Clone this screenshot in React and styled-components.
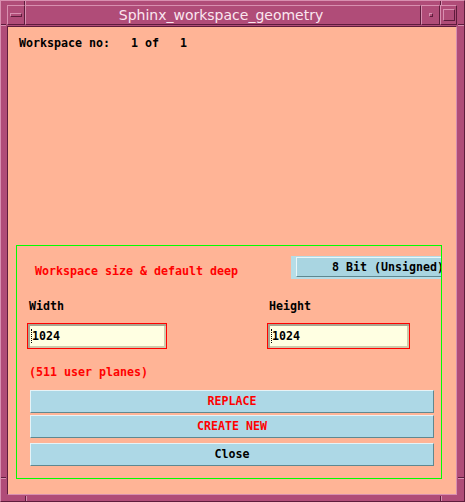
import React from 'react';
import styled, { createGlobalStyle } from 'styled-components';

const FRAME = '#b04c78';
const FRAME_LIGHT = '#d88fb0';
const FRAME_DARK = '#5e1c3c';
const PEACH = '#ffb496';

const Global = createGlobalStyle`
  html, body { margin: 0; padding: 0; background: ${FRAME}; }
  * { box-sizing: border-box; }
`;

const Window = styled.div`
  position: relative;
  width: 465px;
  height: 502px;
  display: flex;
  flex-direction: column;
  background: ${FRAME};
  padding: 4px 7px 6px 6px;
  border-top: 1px solid ${FRAME_LIGHT};
  border-left: 1px solid ${FRAME_LIGHT};
  border-right: 1px solid ${FRAME_DARK};
  border-bottom: 1px solid ${FRAME_DARK};
`;

const Tick = styled.span`
  position: absolute;
  left: ${p => p.$x}px;
  top: ${p => p.$y}px;
  width: ${p => p.$w}px;
  height: ${p => p.$h}px;
  background: ${FRAME_DARK};
  box-shadow: ${p => (p.$w > p.$h ? `0 1px 0 ${FRAME_LIGHT}` : `1px 0 0 ${FRAME_LIGHT}`)};
`;

const TitleBar = styled.div`
  display: flex;
  height: 20px;
  margin-bottom: 1px;
`;

const TitleSeg = styled.div`
  display: flex;
  align-items: center;
  justify-content: center;
  flex: ${p => (p.$w ? `0 0 ${p.$w}px` : '1 1 auto')};
  background: ${FRAME};
  border-top: 1px solid ${FRAME_LIGHT};
  border-left: 1px solid ${FRAME_LIGHT};
  border-right: 1px solid ${FRAME_DARK};
  border-bottom: 1px solid ${FRAME_DARK};
`;

const TitleText = styled.span`
  font-family: "DejaVu Sans", sans-serif;
  font-size: 14px;
  line-height: 18px;
  color: #fbe6ef;
  margin-left: -4px;
`;

const MenuBar = styled.span`
  width: 12px;
  height: 4px;
  border-top: 1px solid ${FRAME_LIGHT};
  border-left: 1px solid ${FRAME_LIGHT};
  border-right: 1px solid ${FRAME_DARK};
  border-bottom: 1px solid ${FRAME_DARK};
`;

const MinBox = styled.span`
  width: 4px;
  height: 4px;
  border-top: 1px solid ${FRAME_LIGHT};
  border-left: 1px solid ${FRAME_LIGHT};
  border-right: 1px solid ${FRAME_DARK};
  border-bottom: 1px solid ${FRAME_DARK};
`;

const MaxBox = styled.span`
  width: 12px;
  height: 12px;
  border-top: 1px solid ${FRAME_LIGHT};
  border-left: 1px solid ${FRAME_LIGHT};
  border-right: 1px solid ${FRAME_DARK};
  border-bottom: 1px solid ${FRAME_DARK};
`;

const Content = styled.div`
  flex: 1 1 auto;
  display: flex;
  flex-direction: column;
  background: ${PEACH};
  border-top: 1px solid ${FRAME_DARK};
  border-left: 1px solid ${FRAME_DARK};
  border-right: 1px solid ${FRAME_LIGHT};
  border-bottom: 1px solid ${FRAME_LIGHT};
  font-family: "DejaVu Sans Mono", "Liberation Mono", monospace;
  font-weight: bold;
  font-size: 11.63px;
  color: #000;
`;

const Header = styled.div`
  margin-top: 9px;
  padding-left: 11px;
  line-height: 14px;
  white-space: pre;
`;

const GreenBox = styled.div`
  margin: auto 0 15px 8px;
  width: 426px;
  height: 234px;
  border: 1px solid #00ff00;
  overflow: hidden;
  display: flex;
  flex-direction: column;
`;

const TopRow = styled.div`
  margin-top: 10px;
  height: 23px;
  display: flex;
  justify-content: space-between;
`;

const RedText = styled.div`
  color: #ff0000;
  line-height: 14px;
  padding-left: ${p => p.$pl}px;
  padding-top: ${p => p.$pt || 0}px;
  margin-top: ${p => p.$mt || 0}px;
`;

const DepthMenu = styled.div`
  width: 150px;
  height: 23px;
  background: #b6dde7;
  padding: 1px 0 2px 5px;
  overflow: hidden;
`;

const DepthButton = styled.div`
  width: 170px;
  height: 100%;
  background: #a9d5e1;
  border-top: 1px solid #eaf6f9;
  border-left: 1px solid #eaf6f9;
  border-bottom: 1px solid #5f8890;
  padding-left: 35px;
  line-height: 18px;
  white-space: pre;
`;

const Fields = styled.div`
  display: grid;
  grid-template-columns: 240px 143px;
  padding-left: 10px;
  margin-top: 20px;
`;

const Field = styled.div`
  display: flex;
  flex-direction: column;
`;

const FieldLabel = styled.div`
  padding-left: 2px;
  line-height: 14px;
`;

const TextBox = styled.div`
  margin-top: 10px;
  width: ${p => p.$w}px;
  height: 26px;
  border: 1px solid #ff0000;
  background: #ffffe2;
  box-shadow: inset 2px 2px 0 #a9a58f, inset -2px -2px 0 #cfc9ac;
  display: flex;
  align-items: center;
  padding-left: 3px;
`;

const Caret = styled.span`
  width: 1px;
  height: 14px;
  border-left: 1px dotted #000;
`;

const Buttons = styled.div`
  display: flex;
  flex-direction: column;
  margin: 11px 7px 0 13px;
`;

const Button = styled.div`
  height: 23px;
  margin-top: ${p => p.$gap || 0}px;
  background: #add8e6;
  border-style: solid;
  border-width: 1px;
  border-color: #e6f3f7 #5f8890 #5f8890 #e6f3f7;
  color: ${p => (p.$red ? '#ff0000' : '#000')};
  text-align: center;
  line-height: 21px;
`;

export default function App() {
  return (
    <>
      <Global />
      <Window>
        <Tick $x={23} $y={0} $w={1} $h={4} />
        <Tick $x={439} $y={0} $w={1} $h={4} />
        <Tick $x={0} $y={23} $w={5} $h={1} />
        <Tick $x={457} $y={23} $w={6} $h={1} />
        <Tick $x={0} $y={476} $w={5} $h={1} />
        <Tick $x={457} $y={476} $w={6} $h={1} />
        <Tick $x={24} $y={495} $w={1} $h={5} />
        <Tick $x={439} $y={495} $w={1} $h={5} />
        <TitleBar>
          <TitleSeg $w={18}><MenuBar /></TitleSeg>
          <TitleSeg><TitleText>Sphinx_workspace_geometry</TitleText></TitleSeg>
          <TitleSeg $w={19}><MinBox /></TitleSeg>
          <TitleSeg $w={17}><MaxBox /></TitleSeg>
        </TitleBar>
        <Content>
          <Header>{'Workspace no:   1 of   1'}</Header>
          <GreenBox>
            <TopRow>
              <RedText $pl={18} $pt={8}>Workspace size &amp; default deep</RedText>
              <DepthMenu>
                <DepthButton>8 Bit (Unsigned)</DepthButton>
              </DepthMenu>
            </TopRow>
            <Fields>
              <Field>
                <FieldLabel>Width</FieldLabel>
                <TextBox $w={140}><Caret />1024</TextBox>
              </Field>
              <Field>
                <FieldLabel>Height</FieldLabel>
                <TextBox $w={143}><Caret />1024</TextBox>
              </Field>
            </Fields>
            <RedText $pl={12} $mt={16}>(511 user planes)</RedText>
            <Buttons>
              <Button $red>REPLACE</Button>
              <Button $red $gap={2}>CREATE NEW</Button>
              <Button $gap={5}>Close</Button>
            </Buttons>
          </GreenBox>
        </Content>
      </Window>
    </>
  );
}
